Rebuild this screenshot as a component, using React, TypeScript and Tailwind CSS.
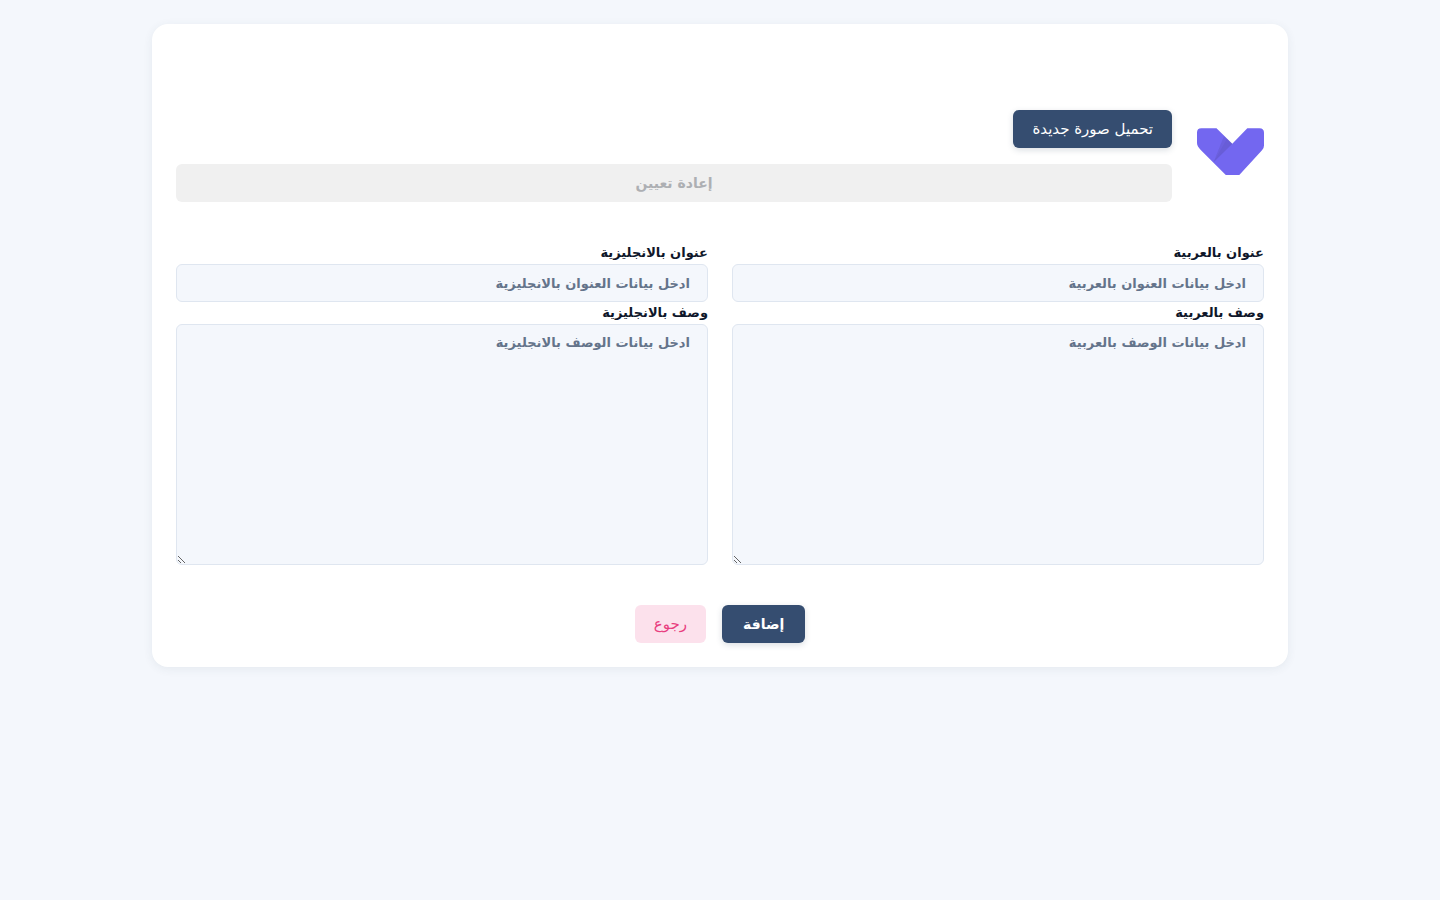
import { clsx } from "clsx";

const buttonBase = "h-[38px] rounded-md whitespace-nowrap focus:outline-none";
const buttonRegular = "px-[19px] text-[15px]";
const buttonBold = "px-[21px] text-sm font-bold";
const buttonPrimary =
  "bg-[#354d70] text-white shadow-[0_2px_6px_rgba(50,71,92,0.18)]";

const fieldBase =
  "block w-full rounded-md border border-[#dfe6f0] bg-[#f4f7fc] px-[17px] py-2 text-[13px]/[20px] font-bold text-[#0f172a] placeholder:text-[#64748b] focus:outline-none";

const Logo = () => (
  <svg
    viewBox="0 0 67 47"
    className="mb-[9px] h-[47px] w-[67px] shrink-0"
    role="img"
    aria-label="logo"
  >
    <path
      d="M0 4.5Q0 .2 4.3.2H19.5L35.3 15.8 50.3.2H62.5Q67 .2 67 4.8V17.5Q67 20.2 65 22.3L42.3 47H28.8L4 22.2Q0 18.5 0 15Z"
      fill="#7367f0"
    />
    <path d="M27 8L35.3 15.8 16.5 34.2Z" fill="#161616" fillOpacity=".08" />
    <path d="M30 10.8L35.3 15.8 16.5 34.2Z" fill="#161616" fillOpacity=".04" />
  </svg>
);

type FieldProps = {
  id: string;
  label: string;
  placeholder: string;
  multiline?: boolean;
};

const Field = ({ id, label, placeholder, multiline }: FieldProps) => (
  <div>
    <label
      htmlFor={id}
      className="block text-[13px]/[22px] font-bold text-[#0f172a]"
    >
      {label}
    </label>
    {multiline ? (
      <textarea
        id={id}
        placeholder={placeholder}
        className={clsx(fieldBase, "h-[241px] resize")}
      />
    ) : (
      <input
        id={id}
        type="text"
        placeholder={placeholder}
        className={clsx(fieldBase, "h-[38px]")}
      />
    )}
  </div>
);

export default function App() {
  return (
    <main
      dir="rtl"
      className="min-h-screen bg-[#f4f7fc] px-4 py-6 font-['DejaVu_Sans',sans-serif]"
    >
      <form
        className="mx-auto max-w-[1136px] rounded-2xl bg-white px-6 pt-[86px] pb-6 shadow-[0_2px_10px_rgba(50,71,92,0.08)]"
        onSubmit={(e) => e.preventDefault()}
      >
        <div className="flex items-center gap-[25px]">
          <Logo />
          <div className="flex flex-1 flex-col items-start gap-4">
            <button
              type="button"
              className={clsx(buttonBase, buttonRegular, buttonPrimary)}
            >
              تحميل صورة جديدة
            </button>
            <button
              type="button"
              disabled
              className={clsx(
                buttonBase,
                buttonBold,
                "w-full bg-[#f0f0f0] text-[#adafb3]"
              )}
            >
              إعادة تعيين
            </button>
          </div>
        </div>

        <div className="mt-10 grid gap-x-6 md:grid-cols-2">
          <Field
            id="title-ar"
            label="عنوان بالعربية"
            placeholder="ادخل بيانات العنوان بالعربية"
          />
          <Field
            id="title-en"
            label="عنوان بالانجليزية"
            placeholder="ادخل بيانات العنوان بالانجليزية"
          />
          <Field
            id="description-ar"
            label="وصف بالعربية"
            placeholder="ادخل بيانات الوصف بالعربية"
            multiline
          />
          <Field
            id="description-en"
            label="وصف بالانجليزية"
            placeholder="ادخل بيانات الوصف بالانجليزية"
            multiline
          />
        </div>

        <div className="mt-10 flex justify-center gap-4">
          <button
            type="submit"
            className={clsx(buttonBase, buttonBold, buttonPrimary)}
          >
            إضافة
          </button>
          <button
            type="button"
            className={clsx(
              buttonBase,
              buttonRegular,
              "bg-[#fce1ec] text-[#e83e7f]"
            )}
          >
            رجوع
          </button>
        </div>
      </form>
    </main>
  );
}
